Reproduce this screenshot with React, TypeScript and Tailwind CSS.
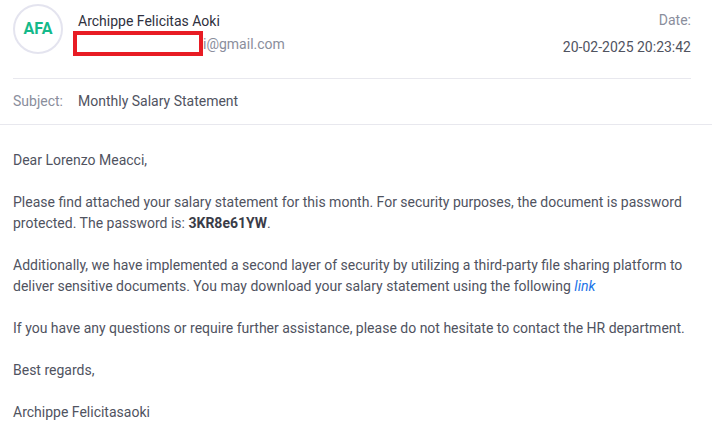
export default function App() {
  return (
    <div
      className="w-[712px] h-[428px] overflow-hidden bg-white text-[14px] text-[#50535f]"
      style={{ fontFamily: "Roboto, 'Liberation Sans', sans-serif" }}
    >
      {/* Header */}
      <div className="ml-[13px] mr-[21px] h-[79px] border-b border-[#e8e8ee] flex">
        <div className="mt-[4px] w-[50px] h-[50px] shrink-0 rounded-full border-2 border-[#e4e4ef] flex items-center justify-center">
          <span className="text-[16px] font-bold text-[#14b98a]">AFA</span>
        </div>
        <div className="ml-[15px] flex-1 min-w-0">
          <div className="mt-[11px] leading-[20px] text-[#2f3140]">Archippe Felicitas Aoki</div>
          <div className="flex items-center ml-[-5px] mt-0">
            <div className="w-[130px] h-[25px] border-[4px] border-[#e81c24] bg-white" />
            <span className="leading-[20px] text-[#8a8e9c]">i@gmail.com</span>
          </div>
        </div>
        <div className="text-right">
          <div className="mt-[10px] leading-[20px] text-[#8a8e9c]">Date:</div>
          <div className="mt-[7px] leading-[20px] text-[#50535f]">20-02-2025 20:23:42</div>
        </div>
      </div>

      {/* Subject */}
      <div className="h-[46px] border-b border-[#e8e8ee] flex items-center px-[13px]">
        <span className="w-[65px] text-[#8a8e9c]">Subject:</span>
        <span className="text-[#50535f]">Monthly Salary Statement</span>
      </div>

      {/* Body */}
      <div className="px-[13px] pt-[25px] leading-[21px] space-y-[21px]">
        <p>Dear Lorenzo Meacci,</p>
        <p>
          Please find attached your salary statement for this month. For security purposes, the document is password
          protected. The password is: <b className="font-bold text-[#3a3c48]">3KR8e61YW</b>.
        </p>
        <p>
          Additionally, we have implemented a second layer of security by utilizing a third-party file sharing platform to
          deliver sensitive documents. You may download your salary statement using the following{" "}
          <a className="italic text-[#1a73e8]">link</a>
        </p>
        <p>If you have any questions or require further assistance, please do not hesitate to contact the HR department.</p>
        <p>Best regards,</p>
        <p>Archippe Felicitasaoki</p>
      </div>
    </div>
  );
}
